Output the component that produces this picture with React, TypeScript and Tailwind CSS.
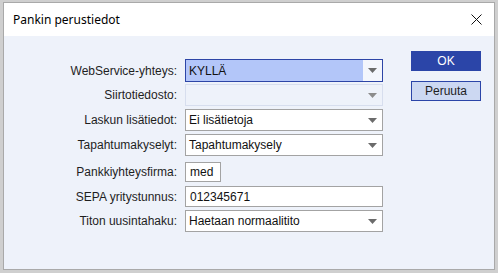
import React from "react";

const font = { fontFamily: '"Liberation Sans", Arial, sans-serif' };

function Arrow({ color = "#6b6b6b" }: { color?: string }) {
  return (
    <svg width="9" height="5" viewBox="0 0 9 5">
      <polygon points="0,0 9,0 4.5,5" fill={color} />
    </svg>
  );
}

function Combo({
  value,
  variant = "normal",
  h = "h-[22px]",
}: {
  value: string;
  variant?: "selected" | "disabled" | "normal";
  h?: string;
}) {
  const box =
    variant === "selected"
      ? "border-[#2d45a6] bg-[#f4f6fc]"
      : variant === "disabled"
      ? "border-[#d7deee] bg-[#eef2fa]"
      : "border-[#a3a3a3] bg-white";
  const text = variant === "selected" ? "bg-[#b3c6f9]" : "";
  return (
    <div className={`flex w-[198px] ${h} border ${box}`}>
      <div className={`flex flex-1 items-center pl-[3px] text-[12px] text-[#111] ${text}`}>
        {value}
      </div>
      <div className="flex w-[19px] items-center justify-center">
        <Arrow color={variant === "disabled" ? "#8c8c8c" : "#6b6b6b"} />
      </div>
    </div>
  );
}

function TextBox({ value, w, h }: { value: string; w: string; h: string }) {
  return (
    <div
      className={`flex ${w} ${h} items-center border border-[#a3a3a3] bg-white pl-[4px] text-[12px] text-[#111]`}
    >
      {value}
    </div>
  );
}

function Row({
  label,
  children,
  mt,
  h,
}: {
  label: string;
  children: React.ReactNode;
  mt: string;
  h: string;
}) {
  return (
    <div className={`flex ${mt} ${h} items-center`}>
      <div className="w-[181px] pr-[8px] text-right text-[12px] text-[#1e1e1e]">{label}</div>
      {children}
    </div>
  );
}

export default function App() {
  return (
    <div className="h-[273px] w-[498px] bg-[#cfcfcf] pl-[3px] pt-[2px]" style={font}>
      <div className="flex h-[268px] w-[492px] flex-col border border-[#a9a9a9]">
        <div
          className="flex h-[33px] items-center justify-between bg-white pl-[9px] pr-[9px]"
          style={{ fontFamily: '"Noto Sans", "Open Sans", sans-serif' }}
        >
          <span className="text-[12px] text-black">Pankin perustiedot</span>
          <svg width="11" height="11" viewBox="0 0 11 11" className="mr-[3px]">
            <path d="M0.5 0.5 L10.5 10.5 M10.5 0.5 L0.5 10.5" stroke="#111" strokeWidth="1" />
          </svg>
        </div>
        <div className="flex flex-1 bg-[#eef2fa]">
          <div className="flex flex-col pt-[23px]">
            <Row label="WebService-yhteys:" mt="mt-0" h="h-[23px]">
              <Combo value="KYLLÄ" variant="selected" h="h-[23px]" />
            </Row>
            <Row label="Siirtotiedosto:" mt="mt-[2px]" h="h-[22px]">
              <Combo value="" variant="disabled" />
            </Row>
            <Row label="Laskun lisätiedot:" mt="mt-[3px]" h="h-[22px]">
              <Combo value="Ei lisätietoja" />
            </Row>
            <Row label="Tapahtumakyselyt:" mt="mt-[3px]" h="h-[22px]">
              <Combo value="Tapahtumakysely" />
            </Row>
            <Row label="Pankkiyhteysfirma:" mt="mt-[6px]" h="h-[20px]">
              <TextBox value="med" w="w-[36px]" h="h-[20px]" />
            </Row>
            <Row label="SEPA yritystunnus:" mt="mt-[4px]" h="h-[21px]">
              <TextBox value="012345671" w="w-[198px]" h="h-[21px]" />
            </Row>
            <Row label="Titon uusintahaku:" mt="mt-[3px]" h="h-[22px]">
              <Combo value="Haetaan normaalitito" />
            </Row>
          </div>
          <div className="ml-[28px] flex flex-col pt-[15px]">
            <div className="flex h-[20px] w-[70px] items-center justify-center bg-[#2b45a8] text-[12px] text-white">
              OK
            </div>
            <div className="mt-[10px] flex h-[20px] w-[70px] items-center justify-center border border-[#2b45a8] bg-[#ccd8f2] text-[12px] text-[#1e1e1e]">
              Peruuta
            </div>
          </div>
        </div>
      </div>
    </div>
  );
}
